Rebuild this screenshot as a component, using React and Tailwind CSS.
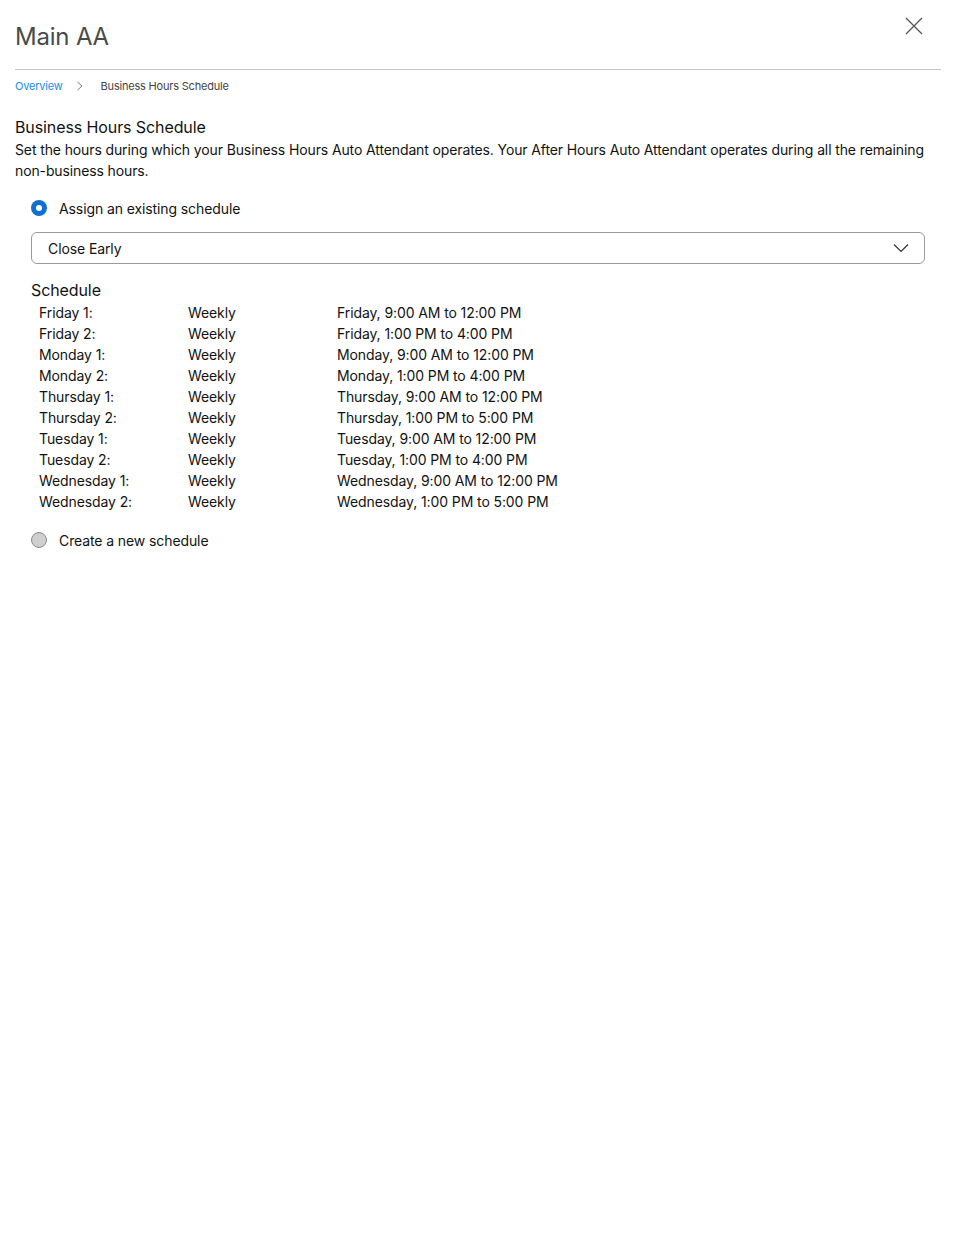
import React from "react";

const rows = [
  ["Friday 1:", "Weekly", "Friday, 9:00 AM to 12:00 PM"],
  ["Friday 2:", "Weekly", "Friday, 1:00 PM to 4:00 PM"],
  ["Monday 1:", "Weekly", "Monday, 9:00 AM to 12:00 PM"],
  ["Monday 2:", "Weekly", "Monday, 1:00 PM to 4:00 PM"],
  ["Thursday 1:", "Weekly", "Thursday, 9:00 AM to 12:00 PM"],
  ["Thursday 2:", "Weekly", "Thursday, 1:00 PM to 5:00 PM"],
  ["Tuesday 1:", "Weekly", "Tuesday, 9:00 AM to 12:00 PM"],
  ["Tuesday 2:", "Weekly", "Tuesday, 1:00 PM to 4:00 PM"],
  ["Wednesday 1:", "Weekly", "Wednesday, 9:00 AM to 12:00 PM"],
  ["Wednesday 2:", "Weekly", "Wednesday, 1:00 PM to 5:00 PM"],
];

export default function App() {
  return (
    <div
      className="w-[953px] h-[1249px] bg-white text-[#121212] pl-[15px] pr-[12px]"
      style={{ fontFamily: "Inter, 'Liberation Sans', sans-serif" }}
    >
      <div className="flex items-start justify-between h-[70px] border-b border-[#c6c6c6]">
        <div className="pt-[22px] text-[24px] leading-[30px] text-[#4a4a4a] tracking-[-0.2px]">Main AA</div>
        <svg width="20" height="20" viewBox="0 0 20 20" className="mt-[16px] mr-[17px]">
          <path d="M2 2 L18 18 M18 2 L2 18" stroke="#555" strokeWidth="1.3" fill="none" />
        </svg>
      </div>
      <div className="flex items-center h-[33px] text-[11px] text-[#444] tracking-[-0.2px]">
        <span className="text-[#1a8cf0]">Overview</span>
        <svg width="8" height="10" viewBox="0 0 8 10" className="ml-[13px] mr-[17px] mt-[-2px]">
          <path d="M1.5 1 L6 5 L1.5 9" stroke="#777" strokeWidth="1" fill="none" />
        </svg>
        <span>Business Hours Schedule</span>
      </div>
      <div className="pt-[14px] text-[16px] leading-[20px] tracking-[-0.1px]">Business Hours Schedule</div>
      <div className="text-[14px] leading-[21px] mt-[2px] tracking-[-0.12px]">
        Set the hours during which your Business Hours Auto Attendant operates. Your After Hours Auto Attendant operates during all the remaining non-business hours.
      </div>
      <div className="pl-[16px] tracking-[-0.1px]">
        <div className="flex items-center h-[20px] mt-[17px] text-[14px]">
          <span className="w-[16px] h-[16px] rounded-full bg-[#1170cf] flex items-center justify-center">
            <span className="w-[6px] h-[6px] rounded-full bg-white" />
          </span>
          <span className="ml-[12px]">Assign an existing schedule</span>
        </div>
        <div className="mt-[14px] h-[32px] w-[894px] border border-[#9a9a9a] rounded-[6px] flex items-center justify-between pl-[16px] pr-[15px] text-[14px]">
          <span>Close Early</span>
          <svg width="16" height="10" viewBox="0 0 16 10">
            <path d="M1 1.5 L8 8.5 L15 1.5" stroke="#333" strokeWidth="1.2" fill="none" />
          </svg>
        </div>
        <div className="mt-[16px] text-[16px] leading-[20px]">Schedule</div>
        <div className="mt-[2px] pl-[8px] text-[14px] leading-[21px]">
          {rows.map((r) => (
            <div key={r[0]} className="flex">
              <span className="w-[149px]">{r[0]}</span>
              <span className="w-[149px]">{r[1]}</span>
              <span>{r[2]}</span>
            </div>
          ))}
        </div>
        <div className="flex items-center h-[20px] mt-[18px] text-[14px]">
          <span className="w-[16px] h-[16px] rounded-full bg-[#cfcfcf] border border-[#8a8a8a]" />
          <span className="ml-[12px]">Create a new schedule</span>
        </div>
      </div>
    </div>
  );
}
